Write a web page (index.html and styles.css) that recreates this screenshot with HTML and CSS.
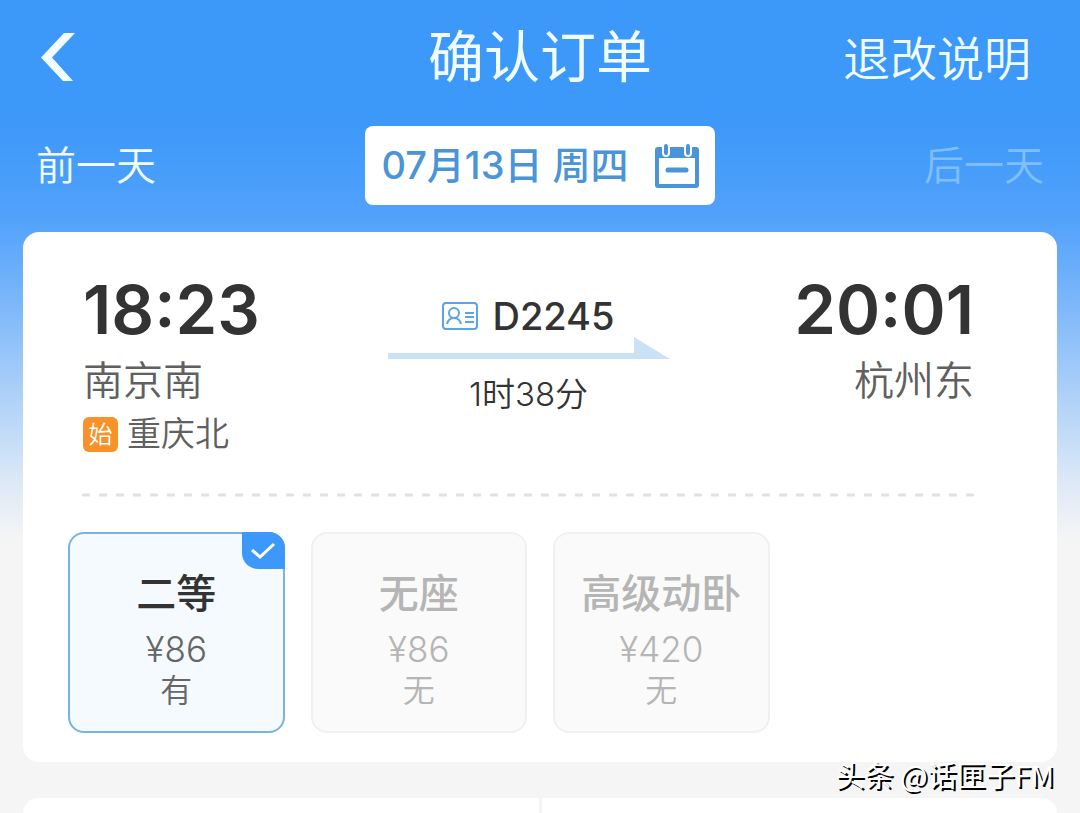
FILE: index.html
```
<!DOCTYPE html>
<html lang="zh-CN">
<head>
    <meta charset="UTF-8">
    <meta name="viewport" content="width=device-width, initial-scale=1.0">
    <title>确认订单</title>
    <link rel="stylesheet" href="styles.css">
</head>
<body>
    <header class="header">
        <button class="back" type="button" aria-label="返回">
            <svg width="34" height="48" viewBox="0 0 34 48">
                <path d="M23 0h11L11 24.500l21 23.500h-10L0 24.500z" fill="#f0fcff"/>
            </svg>
        </button>
        <h1>确认订单</h1>
        <a class="rules" href="#">退改说明</a>
    </header>

    <nav class="days">
        <button class="day" type="button">前一天</button>
        <button class="date" type="button">
            <span>07月13日 周四</span>
            <svg width="44" height="44" viewBox="0 0 44 44">
                <path d="M3 3h38a3 3 0 0 1 3 3v35a3 3 0 0 1-3 3H3a3 3 0 0 1-3-3V6a3 3 0 0 1 3-3z" fill="#4a94d8"/>
                <path d="M4 14h36v26H4z" fill="#fff"/>
                <path d="M11 2v7M33 2v7" stroke="#fff" stroke-width="8" stroke-linecap="round"/>
                <path d="M11 2v7M33 2v7" stroke="#4a94d8" stroke-width="4" stroke-linecap="round"/>
                <path d="M13 26h18" stroke="#4a94d8" stroke-width="5" stroke-linecap="round"/>
            </svg>
        </button>
        <button class="day" type="button" disabled>后一天</button>
    </nav>

    <main class="card">
        <section class="trip">
            <div class="stop">
                <div class="time">18:23</div>
                <div class="station">南京南</div>
                <div class="origin"><span class="tag">始</span>重庆北</div>
            </div>
            <div class="train">
                <div class="number">
                    <svg width="36" height="28" viewBox="0 0 36 28" fill="none" stroke="#5aa5e4" stroke-width="2">
                        <rect x="1" y="1" width="34" height="26" rx="3"/>
                        <circle cx="12" cy="11" r="5"/>
                        <path d="M5 22c1-4 3-6 7-6s6 2 7 6M23 11h9M23 15h9M23 20h9"/>
                    </svg>
                    <span>D2245</span>
                </div>
                <svg class="arrow" viewBox="0 0 282 22">
                    <path d="M0 16h246V0l36 22H0z" fill="#cbe1f6"/>
                </svg>
                <div class="duration">1时38分</div>
            </div>
            <div class="stop end">
                <div class="time">20:01</div>
                <div class="station">杭州东</div>
            </div>
        </section>

        <svg class="divider" height="3">
            <line x1="0" y1="1" x2="100%" y2="1" stroke="#e2e2e2" stroke-width="3" stroke-dasharray="8 9"/>
        </svg>

        <form class="seats">
            <label class="seat selected">
                <input type="radio" name="seat" value="second" checked>
                <span class="check">
                    <svg width="24" height="16" viewBox="0 0 24 16">
                        <path d="M1 7l8 7L23 1" fill="none" stroke="#fff" stroke-width="3"/>
                    </svg>
                </span>
                <span class="name">二等</span>
                <span class="price">¥86</span>
                <span class="left">有</span>
            </label>
            <label class="seat">
                <input type="radio" name="seat" value="standing" disabled>
                <span class="name">无座</span>
                <span class="price">¥86</span>
                <span class="left">无</span>
            </label>
            <label class="seat">
                <input type="radio" name="seat" value="sleeper" disabled>
                <span class="name">高级动卧</span>
                <span class="price">¥420</span>
                <span class="left">无</span>
            </label>
        </form>
    </main>

    <div class="next">
        <div></div>
        <div></div>
    </div>

    <div class="watermark">头条 @话匣子FM</div>
</body>
</html>
```

FILE: styles.css
```
* {
    box-sizing: border-box;
}
body {
    display: flex;
    flex-direction: column;
    min-height: 100vh;
    margin: 0;
    font-family: Inter, "Noto Sans CJK SC", sans-serif;
    color: #333;
    background: #f5f5f5 linear-gradient(#3c98f9 0, #3c98f9 120px, #52a2fb 220px, #7ab6fa 300px, #b0d2f8 400px, #dce8f6 480px, #f5f5f5 540px) no-repeat;
}
button {
    padding: 0;
    border: none;
    background: none;
    font-family: inherit;
    cursor: pointer;
}
svg {
    display: block;
    overflow: visible;
}
.header {
    display: grid;
    grid-template-columns: 1fr auto 1fr;
    align-items: center;
    height: 114px;
    padding: 0 41px;
}
.back {
    justify-self: start;
}
h1 {
    margin: 0;
    font-size: 56px;
    font-weight: 400;
    line-height: 80px;
    color: #f0fcff;
}
.rules {
    justify-self: end;
    padding: 4px 8px 0 0;
    font-size: 47px;
    font-weight: 350;
    line-height: 80px;
    color: #f0fcff;
    text-decoration: none;
}
.days {
    display: flex;
    justify-content: space-between;
    align-items: center;
    padding: 12px 36px 27px;
}
.day {
    font-size: 40px;
    line-height: 60px;
    font-weight: 350;
    color: #f0fcff;
}
.day:disabled {
    color: #80beff;
    cursor: default;
}
.date {
    display: flex;
    align-items: center;
    gap: 26px;
    height: 79px;
    padding: 0 16px;
    border-radius: 8px;
    background: #fff;
    font-size: 38px;
    font-weight: 500;
    line-height: 60px;
    color: #4a94d8;
}
.date span {
    padding-bottom: 2px;
}
.card {
    margin: 0 23px 36px;
    padding: 42px 45px 29px;
    border-radius: 16px;
    background: #fff;
}
.trip {
    display: grid;
    grid-template-columns: 1fr 282px 1fr;
    padding: 0 38px 0 15px;
}
.stop.end {
    text-align: right;
}
.time {
    font-size: 67px;
    font-weight: 600;
    line-height: 72px;
}
.station {
    margin-top: 7px;
    font-size: 40px;
    font-weight: 350;
    line-height: 56px;
    color: #606060;
}
.origin {
    display: flex;
    align-items: center;
    gap: 9px;
    font-size: 34px;
    font-weight: 350;
    line-height: 50px;
    color: #606060;
}
.tag {
    width: 35px;
    height: 35px;
    border-radius: 6px;
    background: #f7922b;
    font-size: 24px;
    line-height: 35px;
    text-align: center;
    color: #fff;
}
.train {
    padding-top: 21px;
}
.number {
    display: flex;
    justify-content: center;
    align-items: center;
    gap: 14px;
    font-size: 38px;
    font-weight: 500;
    line-height: 42px;
}
.arrow {
    width: 100%;
}
.duration {
    margin-top: 10px;
    font-size: 33px;
    font-weight: 350;
    line-height: 50px;
    text-align: center;
}
.divider {
    width: calc(100% - 48px);
    margin: 35px 34px 35px 14px;
}
.seats {
    display: grid;
    grid-template-columns: repeat(4, 1fr);
    gap: 26px;
}
.seat {
    position: relative;
    display: flex;
    flex-direction: column;
    align-items: center;
    height: 201px;
    padding-top: 30px;
    border: 2px solid #f0f0f0;
    border-radius: 16px;
    background: #fafafa;
    color: #b5b5b5;
}
.seat input {
    position: absolute;
    opacity: 0;
}
.name {
    font-size: 40px;
    font-weight: 500;
    line-height: 60px;
}
.price {
    font-size: 35px;
    font-weight: 350;
    line-height: 50px;
}
.left {
    font-size: 32px;
    font-weight: 350;
    line-height: 34px;
}
.seat.selected {
    border-color: #79b3de;
    background: #f5faff;
    color: #666;
}
.selected .name {
    color: #333;
}
.check {
    position: absolute;
    top: -2px;
    right: -2px;
    display: flex;
    justify-content: center;
    align-items: center;
    width: 43px;
    height: 37px;
    border-radius: 0 16px 0 16px;
    background: #3c98f9;
}
.next {
    display: grid;
    grid-template-columns: 1fr 1fr;
    flex: 1;
    gap: 3px;
    margin: 0 23px;
    border-radius: 16px 16px 0 0;
    overflow: hidden;
}
.next div {
    background: #fff;
}
.watermark {
    position: absolute;
    right: 26px;
    bottom: 19px;
    font-family: "Noto Sans CJK SC", sans-serif;
    font-size: 29px;
    line-height: 40px;
    color: #fff;
    text-shadow: 2px 2px 0 #000;
}
```
